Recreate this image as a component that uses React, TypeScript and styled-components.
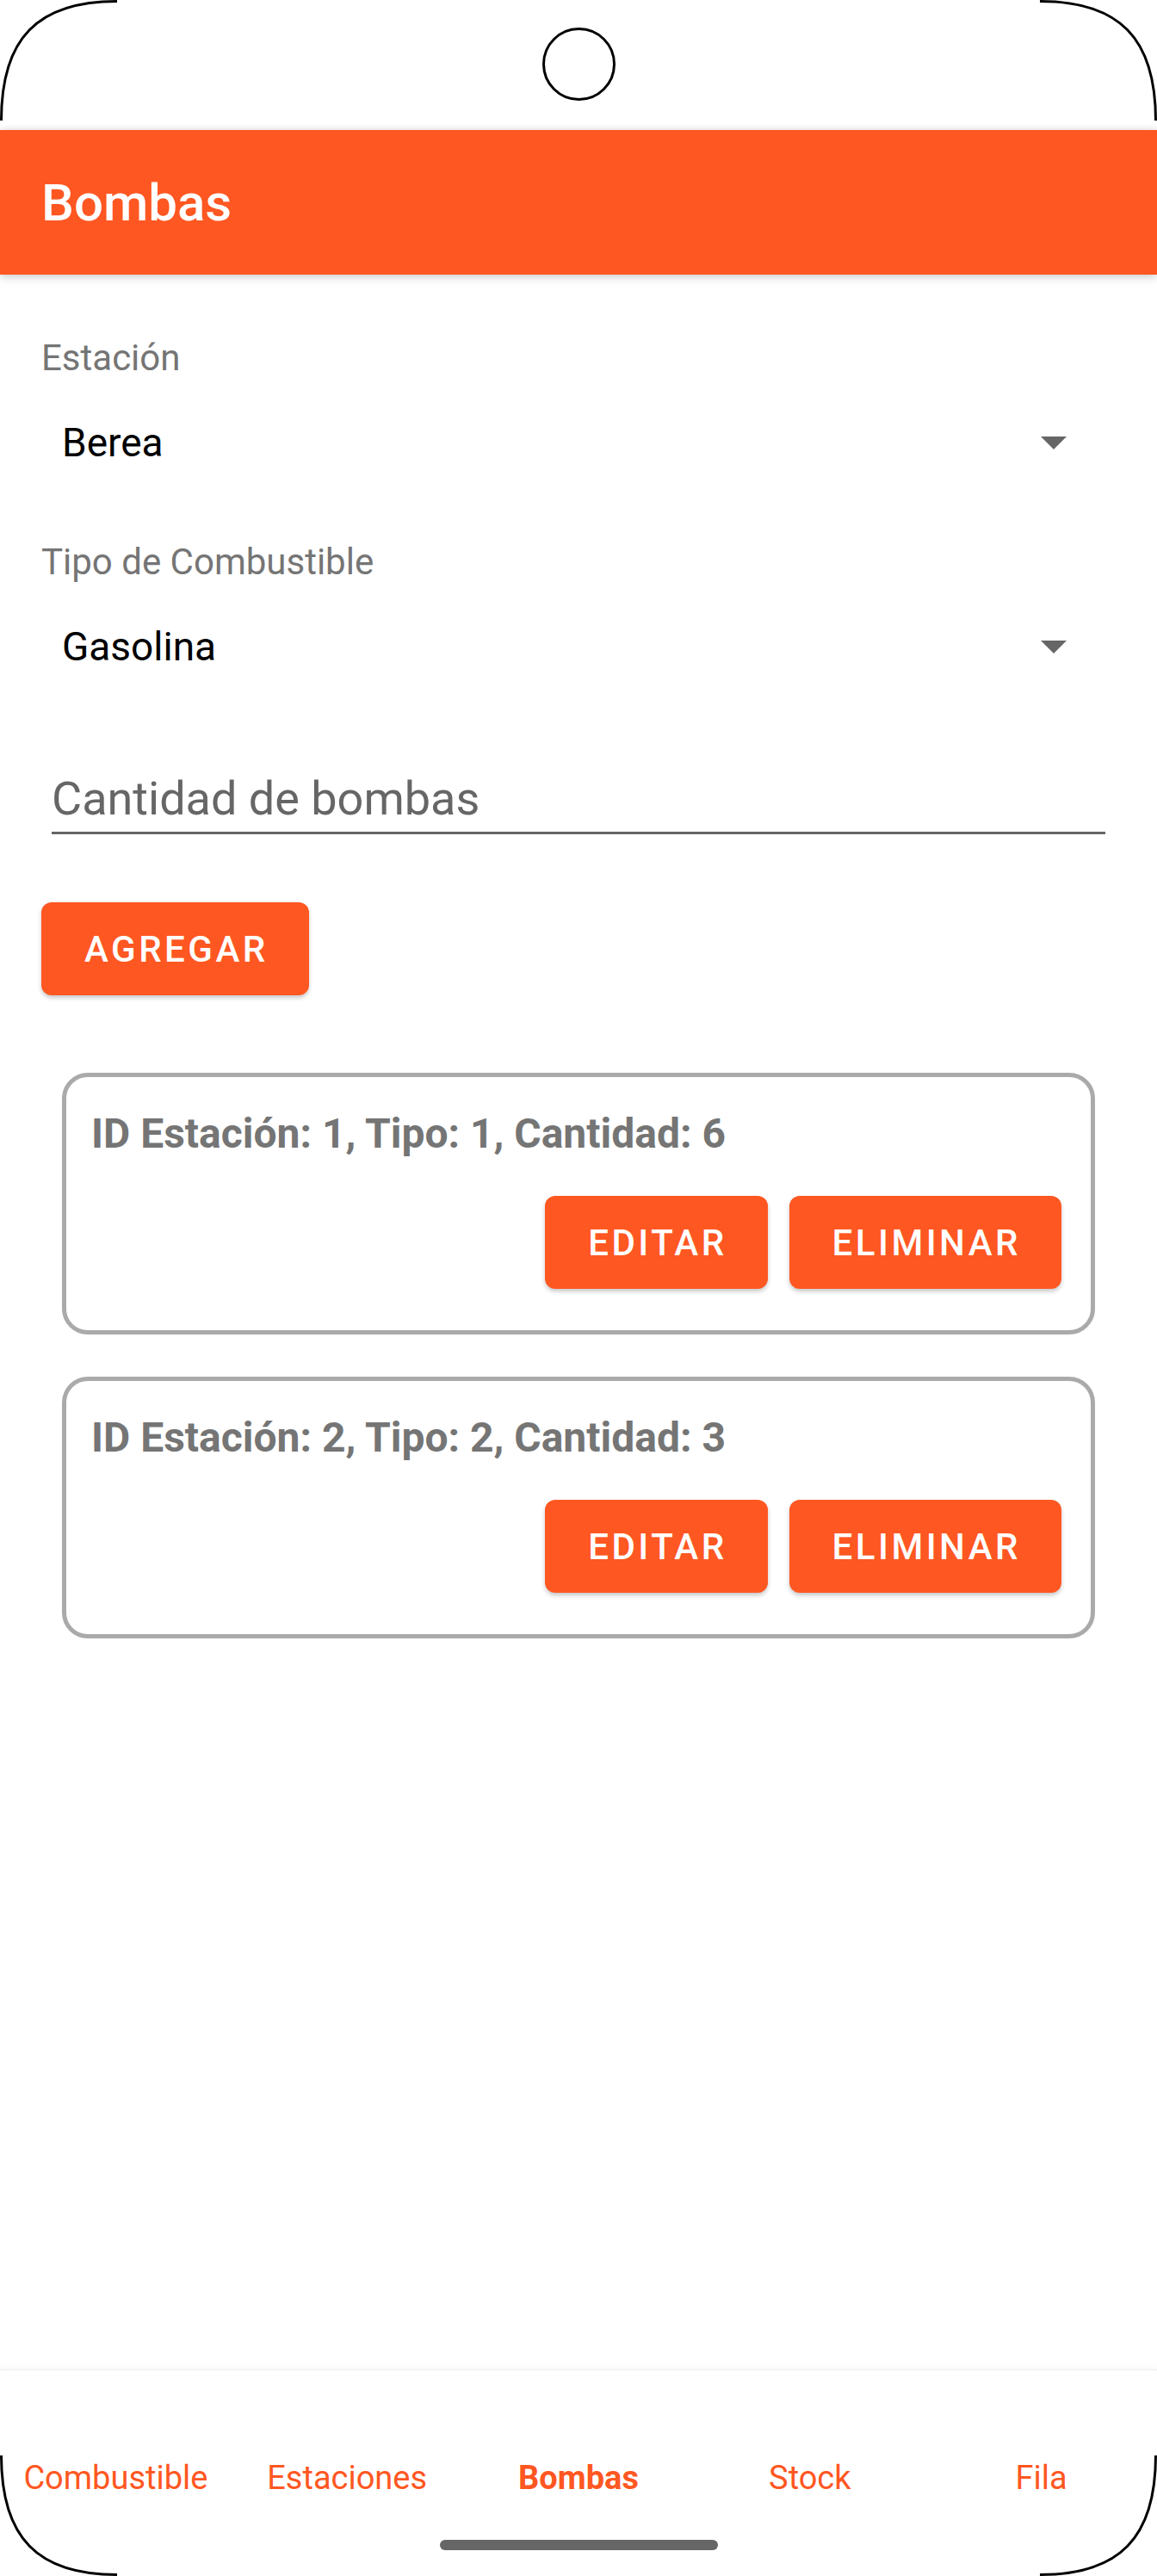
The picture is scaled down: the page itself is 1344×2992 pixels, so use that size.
import React from 'react';
import styled, { createGlobalStyle } from 'styled-components';

const ORANGE = '#ff5722';

const GlobalStyle = createGlobalStyle`
  html, body {
    margin: 0;
    padding: 0;
    background: #fff;
  }
  body {
    font-family: Roboto, "Noto Sans", Arial, sans-serif;
  }
`;

const estaciones = [
  { id: 1, tipo: 1, cantidad: 6 },
  { id: 2, tipo: 2, cantidad: 3 },
];

const tabs = ['Combustible', 'Estaciones', 'Bombas', 'Stock', 'Fila'];

type CornerPos = 'tl' | 'tr' | 'bl' | 'br';

const App = () => {
  return (
    <>
      <GlobalStyle />
      <Phone>
        <StatusArea>
          <Camera />
        </StatusArea>
        <Header>
          <Title>Bombas</Title>
        </Header>

        <Form>
          <Field>
            <FieldLabel>Estación</FieldLabel>
            <Spinner>
              <span>Berea</span>
              <Arrow />
            </Spinner>
          </Field>
          <Field>
            <FieldLabel>Tipo de Combustible</FieldLabel>
            <Spinner>
              <span>Gasolina</span>
              <Arrow />
            </Spinner>
          </Field>

          <InputLine>
            <Input placeholder="Cantidad de bombas" />
          </InputLine>

          <AddButton>Agregar</AddButton>

          <CardList>
            {estaciones.map((e) => (
              <Card key={e.id}>
                <CardText>
                  ID Estación: {e.id}, Tipo: {e.tipo}, Cantidad: {e.cantidad}
                </CardText>
                <CardActions>
                  <Button>Editar</Button>
                  <Button>Eliminar</Button>
                </CardActions>
              </Card>
            ))}
          </CardList>
        </Form>

        <Spacer />

        <BottomNav>
          {tabs.map((t) => (
            <NavItem key={t} $active={t === 'Bombas'}>
              {t}
            </NavItem>
          ))}
        </BottomNav>

        <HomeBar />

        {(['tl', 'tr', 'bl', 'br'] as CornerPos[]).map((p) => (
          <Corner key={p} $pos={p} width="140" height="140" viewBox="0 0 140 140">
            <path d="M1.5 140 C1.5 44 44 1.5 136 1.5" fill="none" stroke="#000" strokeWidth="3" />
          </Corner>
        ))}
      </Phone>
    </>
  );
};

const Arrow = () => (
  <svg width="30" height="15" viewBox="0 0 30 15">
    <polygon points="0,0 30,0 15,15" fill="#666" />
  </svg>
);

export default App;

const Phone = styled.div`
  position: relative;
  width: 1344px;
  height: 2992px;
  display: flex;
  flex-direction: column;
  background: #fff;
  overflow: hidden;
`;

const StatusArea = styled.div`
  height: 151px;
  box-sizing: border-box;
  padding-top: 32px;
  display: flex;
  justify-content: center;
  align-items: flex-start;
`;

const Camera = styled.div`
  width: 85px;
  height: 85px;
  box-sizing: border-box;
  border: 3px solid #000;
  border-radius: 50%;
`;

const Header = styled.header`
  position: relative;
  z-index: 1;
  height: 168px;
  box-sizing: border-box;
  padding: 0 48px;
  display: flex;
  align-items: center;
  background: ${ORANGE};
  box-shadow: 0 3px 10px rgba(0, 0, 0, 0.18), 0 -2px 8px rgba(0, 0, 0, 0.06);
`;

const Title = styled.h1`
  margin: 0;
  font-size: 60px;
  font-weight: 500;
  color: #fff;
`;

const Form = styled.main`
  padding: 72px 48px 0;
  display: flex;
  flex-direction: column;
`;

const Field = styled.div`
  display: flex;
  flex-direction: column;
  & + & {
    margin-top: 41px;
  }
`;

const FieldLabel = styled.div`
  font-size: 42px;
  line-height: 50px;
  color: #757575;
`;

const Spinner = styled.div`
  height: 146px;
  box-sizing: border-box;
  padding: 0 57px 0 24px;
  display: flex;
  align-items: center;
  justify-content: space-between;
  font-size: 46px;
  color: #000;
`;

const InputLine = styled.div`
  margin: 72px 12px 0;
  padding-bottom: 6px;
  border-bottom: 3px solid #666;
`;

const Input = styled.input`
  display: block;
  width: 100%;
  height: 64px;
  box-sizing: border-box;
  padding: 0;
  border: none;
  outline: none;
  background: transparent;
  font-family: inherit;
  font-size: 54px;
  line-height: 64px;
  color: #222;
  &::placeholder {
    color: #666;
  }
`;

const Button = styled.button`
  height: 108px;
  box-sizing: border-box;
  padding: 0 47px 0 50px;
  border: none;
  border-radius: 12px;
  background: ${ORANGE};
  color: #fff;
  font-family: inherit;
  font-size: 42px;
  font-weight: 500;
  letter-spacing: 3.5px;
  text-transform: uppercase;
  box-shadow: 0 3px 5px rgba(0, 0, 0, 0.22);
  cursor: pointer;
`;

const AddButton = styled(Button)`
  margin-top: 79px;
  align-self: flex-start;
`;

const CardList = styled.section`
  margin-top: 90px;
  padding: 0 24px;
  display: flex;
  flex-direction: column;
  gap: 49px;
`;

const Card = styled.article`
  border: 5px solid #aaa;
  border-radius: 30px;
  padding: 38px 34px 48px 29px;
  display: flex;
  flex-direction: column;
  gap: 44px;
`;

const CardText = styled.div`
  font-size: 48px;
  line-height: 56px;
  font-weight: 700;
  color: #757575;
`;

const CardActions = styled.div`
  display: flex;
  justify-content: flex-end;
  gap: 25px;
`;

const Spacer = styled.div`
  flex: 1;
`;

const BottomNav = styled.nav`
  height: 240px;
  box-sizing: border-box;
  padding-top: 103px;
  border-top: 1px solid #eee;
  box-shadow: 0 -3px 6px rgba(0, 0, 0, 0.03);
  display: grid;
  grid-template-columns: repeat(5, 1fr);
  align-items: start;
`;

const NavItem = styled.div<{ $active?: boolean }>`
  text-align: center;
  font-size: 38px;
  line-height: 45px;
  color: ${ORANGE};
  font-weight: ${(p) => (p.$active ? 700 : 400)};
`;

const HomeBar = styled.div`
  position: absolute;
  left: 50%;
  bottom: 30px;
  width: 323px;
  height: 12px;
  margin-left: -161px;
  border-radius: 6px;
  background: #666;
`;

const cornerTransform: Record<CornerPos, string> = {
  tl: 'none',
  tr: 'scaleX(-1)',
  bl: 'scaleY(-1)',
  br: 'scale(-1, -1)',
};

const Corner = styled.svg<{ $pos: CornerPos }>`
  position: absolute;
  ${(p) => (p.$pos[0] === 't' ? 'top: 0;' : 'bottom: 0;')}
  ${(p) => (p.$pos[1] === 'l' ? 'left: 0;' : 'right: 0;')}
  transform: ${(p) => cornerTransform[p.$pos]};
  pointer-events: none;
`;
